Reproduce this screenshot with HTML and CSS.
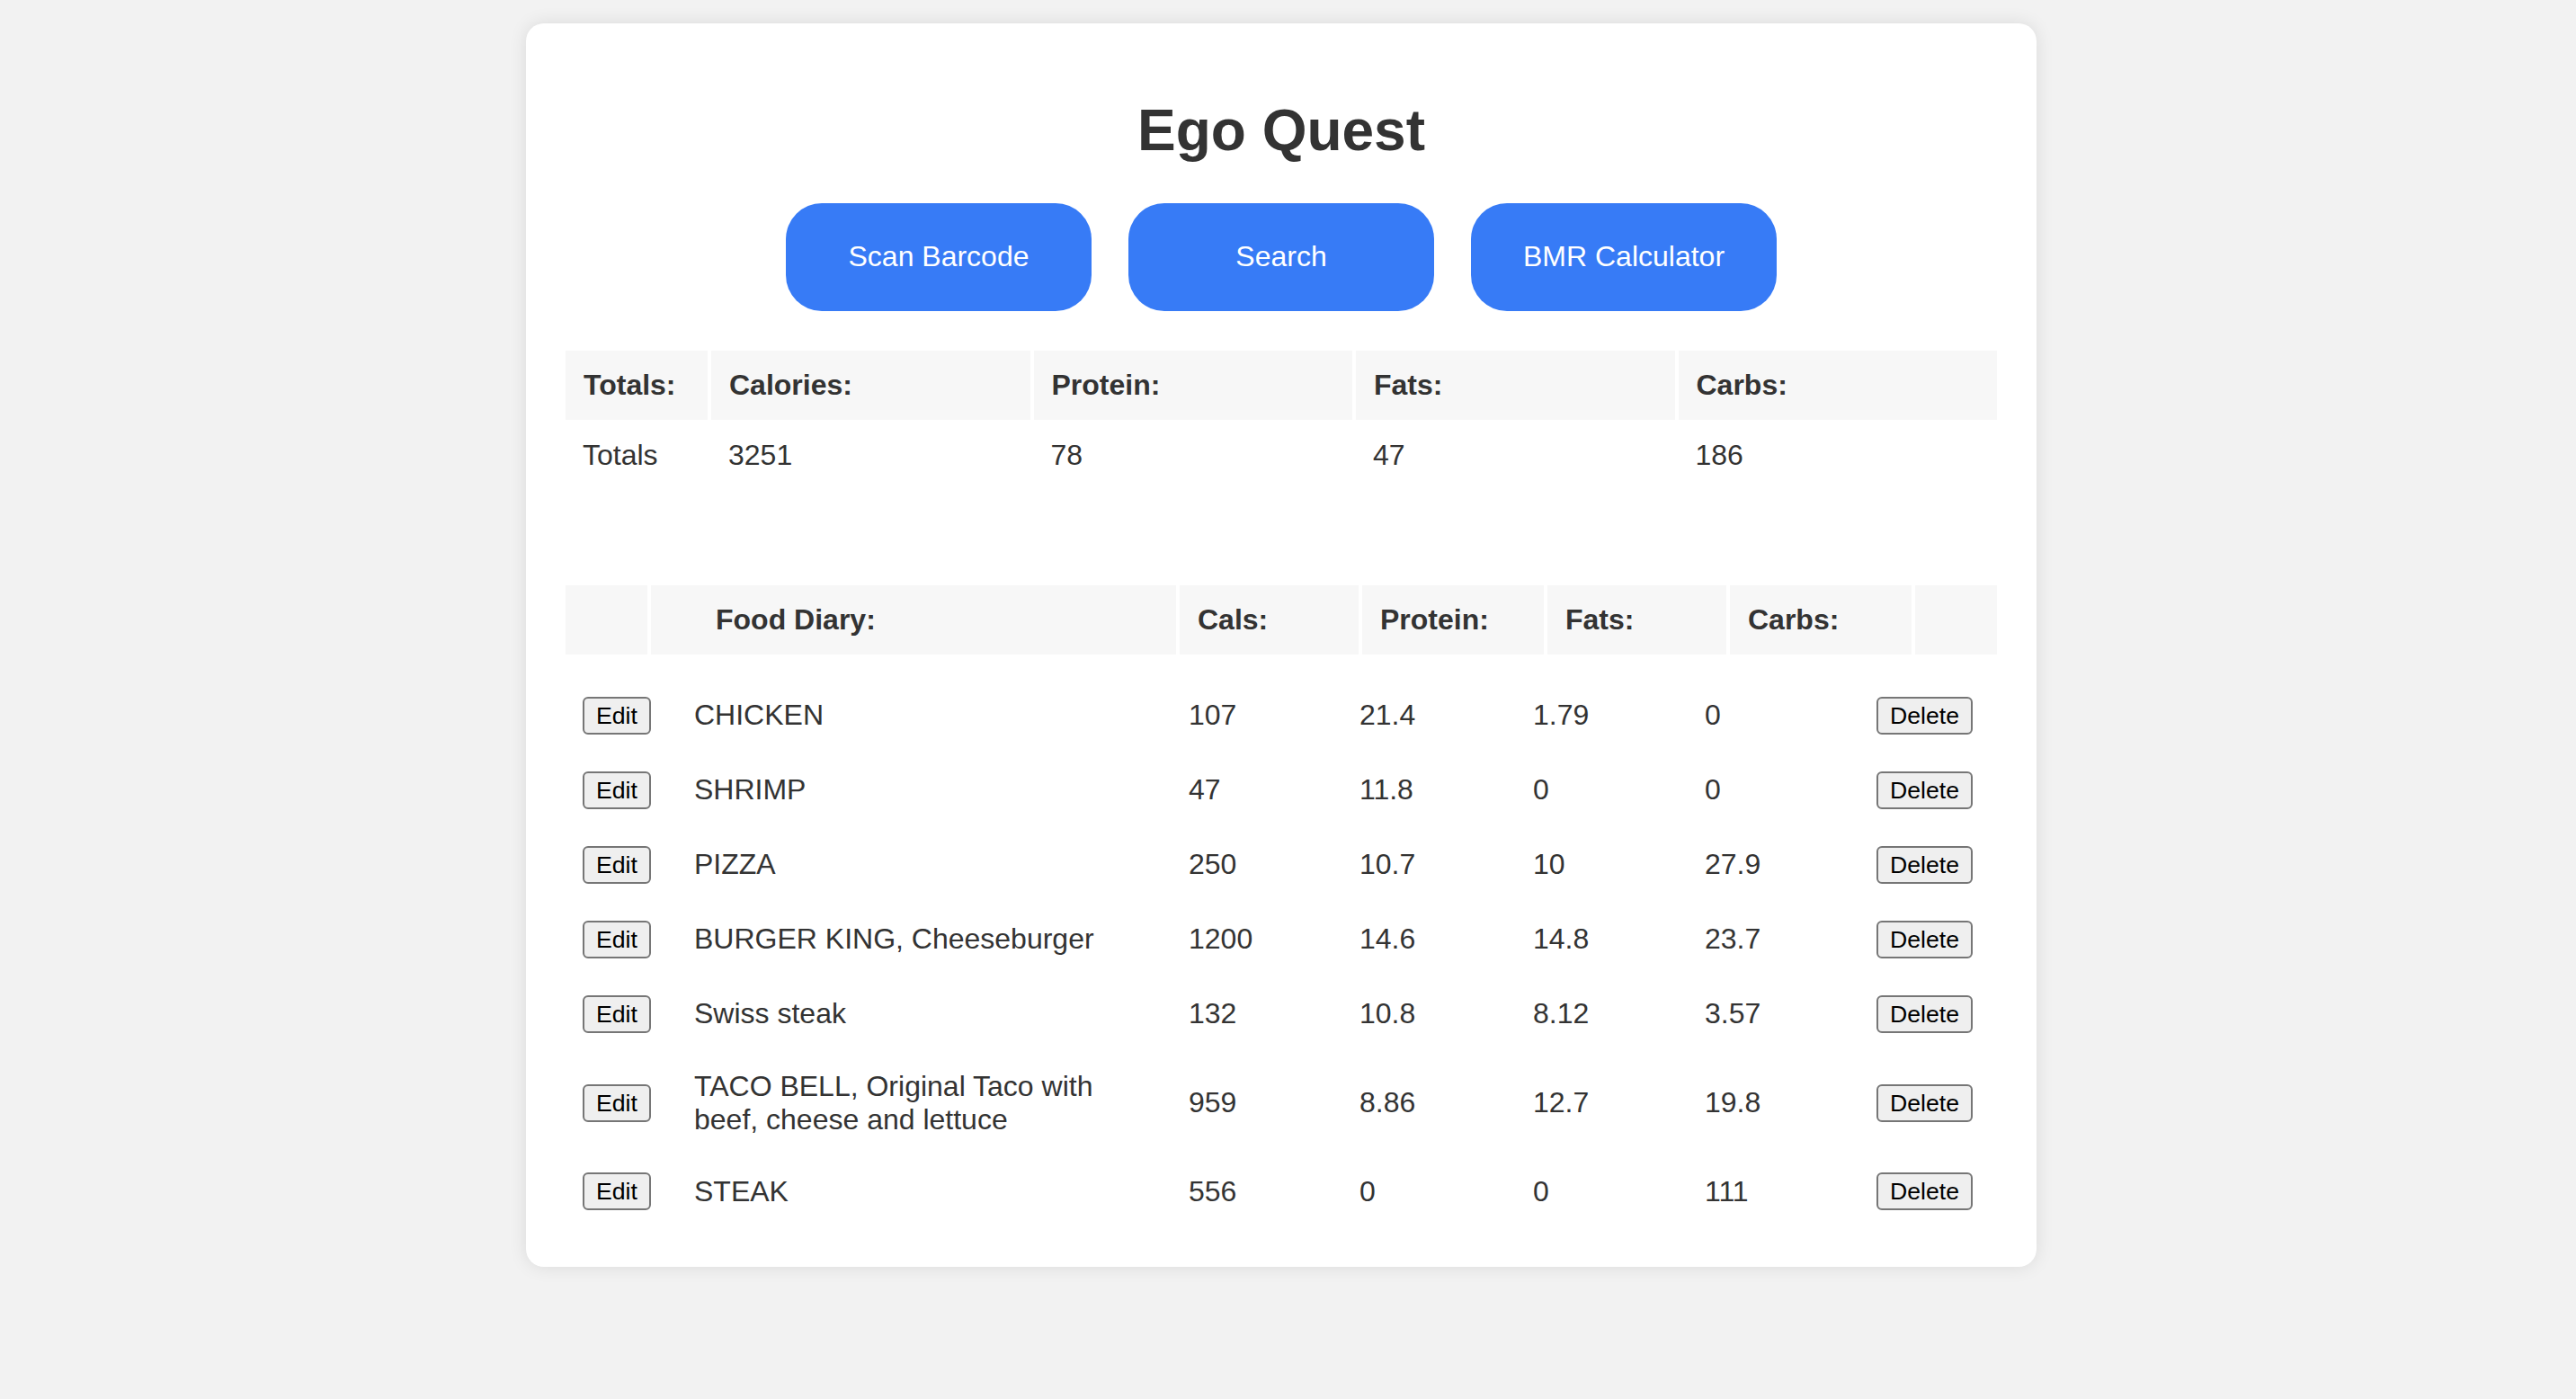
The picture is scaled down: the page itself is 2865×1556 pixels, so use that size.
FILE: index.html
```html
<!DOCTYPE html>
<html lang="en">
<head>
<meta charset="utf-8">
<title>Ego Quest</title>
<link rel="stylesheet" href="styles.css">
</head>
<body>
<div class="container">
  <h1 class="title">Ego Quest</h1>
  <div class="actions">
    <button class="action">Scan Barcode</button>
    <button class="action">Search</button>
    <button class="action">BMR Calculator</button>
  </div>

  <table class="totals">
    <colgroup><col class="tc-first"><col><col><col><col></colgroup>
    <thead>
      <tr><th>Totals:</th><th>Calories:</th><th>Protein:</th><th>Fats:</th><th>Carbs:</th></tr>
    </thead>
    <tbody>
      <tr><td>Totals</td><td>3251</td><td>78</td><td>47</td><td>186</td></tr>
    </tbody>
  </table>

  <table class="diary-head">
    <colgroup>
      <col class="dh-1"><col class="dh-2"><col class="dh-3"><col class="dh-4"><col class="dh-5"><col class="dh-6"><col class="dh-7">
    </colgroup>
    <thead>
      <tr><th></th><th class="food-title">Food Diary:</th><th>Cals:</th><th>Protein:</th><th>Fats:</th><th>Carbs:</th><th></th></tr>
    </thead>
  </table>

  <table class="diary">
    <colgroup>
      <col class="db-1"><col class="db-2"><col class="db-3"><col class="db-4"><col class="db-5"><col class="db-6"><col class="db-7">
    </colgroup>
    <tbody>
      <tr><td><button class="small">Edit</button></td><td>CHICKEN</td><td>107</td><td>21.4</td><td>1.79</td><td>0</td><td><button class="small">Delete</button></td></tr>
      <tr><td><button class="small">Edit</button></td><td>SHRIMP</td><td>47</td><td>11.8</td><td>0</td><td>0</td><td><button class="small">Delete</button></td></tr>
      <tr><td><button class="small">Edit</button></td><td>PIZZA</td><td>250</td><td>10.7</td><td>10</td><td>27.9</td><td><button class="small">Delete</button></td></tr>
      <tr><td><button class="small">Edit</button></td><td>BURGER KING, Cheeseburger</td><td>1200</td><td>14.6</td><td>14.8</td><td>23.7</td><td><button class="small">Delete</button></td></tr>
      <tr><td><button class="small">Edit</button></td><td>Swiss steak</td><td>132</td><td>10.8</td><td>8.12</td><td>3.57</td><td><button class="small">Delete</button></td></tr>
      <tr><td><button class="small">Edit</button></td><td>TACO BELL, Original Taco with beef, cheese and lettuce</td><td>959</td><td>8.86</td><td>12.7</td><td>19.8</td><td><button class="small">Delete</button></td></tr>
      <tr><td><button class="small">Edit</button></td><td>STEAK</td><td>556</td><td>0</td><td>0</td><td>111</td><td><button class="small">Delete</button></td></tr>
    </tbody>
  </table>
</div>
</body>
</html>
```

FILE: styles.css
```css
html, body {
  background: #f2f2f2;
}
body {
  margin: 0;
  padding: 26px 15px 40px 0;
  font-family: "Liberation Sans", Arial, Helvetica, sans-serif;
  color: #333;
}
.container {
  width: 1680px;
  box-sizing: border-box;
  margin: 0 auto;
  padding: 40px;
  background: #fff;
  border-radius: 20px;
  box-shadow: 0 0 20px rgba(0, 0, 0, 0.1);
}
.title {
  margin: 43px 0;
  font-size: 64px;
  font-weight: bold;
  line-height: 73.6px;
  text-align: center;
  color: #333;
}
.actions {
  display: flex;
  justify-content: center;
  gap: 41px;
}
.action {
  width: 340px;
  height: 120px;
  border: none;
  border-radius: 40px;
  background: #377bf6;
  color: #fff;
  font-family: "Liberation Sans", Arial, sans-serif;
  font-size: 32px;
  padding: 0;
}
table {
  width: 100%;
  border-spacing: 4px;
  table-layout: fixed;
  font-size: 32px;
  color: #333;
}
th {
  background: #f7f7f7;
  text-align: left;
  font-weight: bold;
  padding: 20px;
  line-height: 36.8px;
  height: 77px;
  box-sizing: border-box;
}
td {
  padding: 17px 20px 17px 19px;
  line-height: 36.8px;
  text-align: left;
  vertical-align: middle;
}
.totals {
  margin-top: 40px;
}
.tc-first { width: 158px; }

.diary-head {
  margin-top: 102px;
}
.dh-1 { width: 91px; }
.dh-2 { width: 584px; }
.dh-3 { width: 199px; }
.dh-4 { width: 202px; }
.dh-5 { width: 199px; }
.dh-6 { width: 202px; }
.dh-7 { width: 91px; }
.food-title {
  padding-left: 72px;
}

.diary {
  margin-top: 20px;
}
.diary td {
  padding: 18.5px 20px;
}
.db-1 { width: 119px; }
.db-2 { width: 546px; }
.db-3 { width: 186px; }
.db-4 { width: 189px; }
.db-5 { width: 187px; }
.db-6 { width: 187px; }
.db-7 { width: 154px; }

.small {
  font-family: "Liberation Sans", Arial, sans-serif;
  font-size: 26.67px;
  line-height: 34px;
  padding: 2px 13px;
  border: 2px solid #767676;
  border-radius: 6px;
  background: #efefef;
  color: #000;
  vertical-align: middle;
}
.diary td:first-child .small {
  margin-left: -1px;
}
```
